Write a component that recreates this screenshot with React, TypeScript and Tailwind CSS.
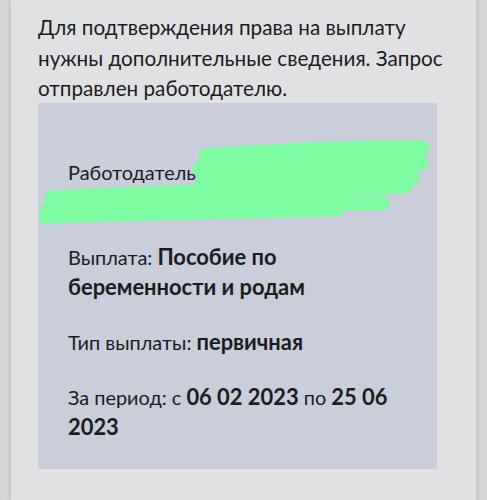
export default function App() {
  return (
    <div
      className="min-h-[500px] w-[487px] bg-[#d6d6d8] px-[10px]"
      style={{ fontFamily: 'Lato, "Noto Sans", sans-serif' }}
    >
      <div className="min-h-[500px] border-x border-[#cdcdd2] bg-[#e1e1e3] pl-[27px] pt-[12px] text-[#1b1c22] shadow-[0_0_4px_rgba(0,0,0,0.15)]">
        <p className="pr-[20px] text-[20.7px] leading-[30.5px]">
          Для подтверждения права на выплату нужны дополнительные сведения. Запрос отправлен работодателю.
        </p>

        <div className="relative -mt-[1px] flex w-[399px] flex-col gap-[25px] bg-[#c9ceda] pb-[27px] pl-[30px] pr-[38px] pt-[54px] text-[19.9px] leading-[30px]">
          <div className="h-[60px]">Работодатель</div>
          <div>
            Выплата: <span className="text-[21.9px] font-bold">Пособие по беременности и родам</span>
          </div>
          <div>
            Тип выплаты: <span className="text-[21.9px] font-bold">первичная</span>
          </div>
          <div>
            За период: с <span className="text-[21.9px] font-bold">06 02 2023</span> по{' '}
            <span className="text-[21.9px] font-bold">25 06 2023</span>
          </div>

          {/* redaction scribble */}
          <svg
            className="pointer-events-none absolute left-0 top-0"
            width="399"
            height="140"
            viewBox="0 0 399 140"
          >
            <g stroke="#7dfca2" strokeLinecap="round" fill="none">
              <path d="M168 53 C236 48 320 44 384 45" strokeWidth="15" />
              <path d="M163 66 C240 60 320 58 382 60" strokeWidth="17" />
              <path d="M165 79 C240 76 320 74 374 75" strokeWidth="15" />
              <path d="M14 95 C120 89 260 86 366 83" strokeWidth="15" />
              <path d="M10 107 C120 101 250 99 344 100" strokeWidth="15" />
              <path d="M6 115 C90 112 200 110 300 108" strokeWidth="11" />
            </g>
          </svg>
        </div>
      </div>
    </div>
  )
}
